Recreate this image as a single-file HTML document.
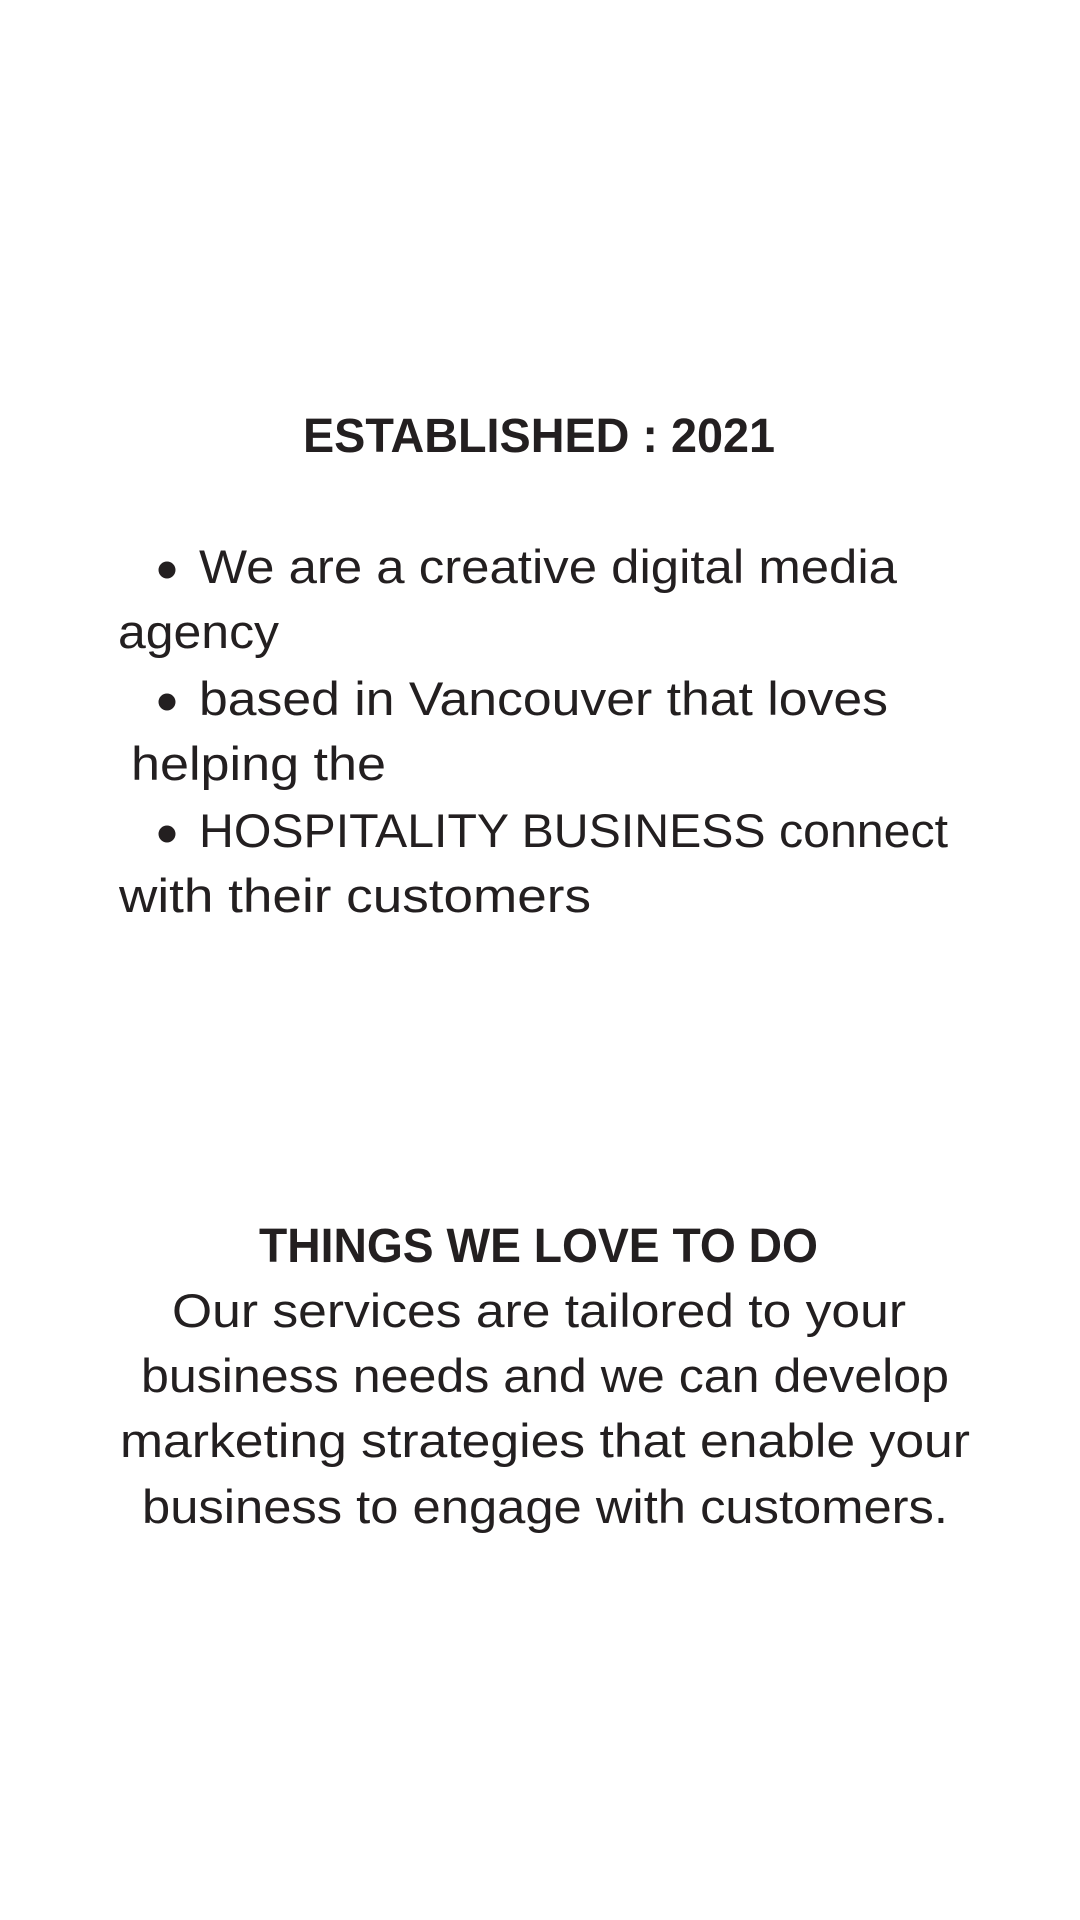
<!DOCTYPE html>
<html><head><meta charset="utf-8"><style>
html,body{margin:0;padding:0;background:#fff;width:1080px;height:1920px;overflow:hidden}
svg{display:block}
text{font-family:"Liberation Sans",sans-serif;fill:#231f20}
.b{font-weight:bold;font-size:48px}
.r{font-size:47px}
</style></head><body>
<svg width="1080" height="1920" viewBox="0 0 1080 1920" xmlns="http://www.w3.org/2000/svg">
<text class="b" x="303" y="452" textLength="472" lengthAdjust="spacingAndGlyphs">ESTABLISHED : 2021</text>
<circle cx="167" cy="570" r="8.5" fill="#231f20"/>
<circle cx="167" cy="702" r="8.5" fill="#231f20"/>
<circle cx="167" cy="834" r="8.5" fill="#231f20"/>
<text class="r" x="199" y="583" textLength="698" lengthAdjust="spacingAndGlyphs">We are a creative digital media</text>
<text class="r" x="118" y="648" textLength="161" lengthAdjust="spacingAndGlyphs">agency</text>
<text class="r" x="199" y="715" textLength="689" lengthAdjust="spacingAndGlyphs">based in Vancouver that loves</text>
<text class="r" x="131" y="780" textLength="255" lengthAdjust="spacingAndGlyphs">helping the</text>
<text class="r" x="199" y="847" textLength="749" lengthAdjust="spacingAndGlyphs">HOSPITALITY BUSINESS connect</text>
<text class="r" x="119" y="912" textLength="472" lengthAdjust="spacingAndGlyphs">with their customers</text>
<text class="b" x="259" y="1262" textLength="559" lengthAdjust="spacingAndGlyphs">THINGS WE LOVE TO DO</text>
<text class="r" x="172" y="1327" textLength="734" lengthAdjust="spacingAndGlyphs">Our services are tailored to your</text>
<text class="r" x="141" y="1392" textLength="808" lengthAdjust="spacingAndGlyphs">business needs and we can develop</text>
<text class="r" x="120" y="1457" textLength="850" lengthAdjust="spacingAndGlyphs">marketing strategies that enable your</text>
<text class="r" x="142" y="1523" textLength="806" lengthAdjust="spacingAndGlyphs">business to engage with customers.</text>
</svg>
</body></html>
